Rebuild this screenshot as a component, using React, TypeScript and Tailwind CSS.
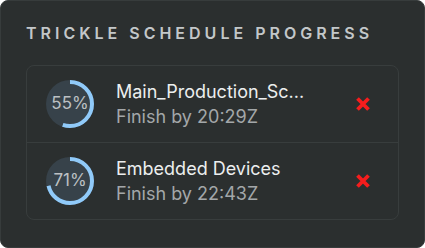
import type React from "react";

type Job = {
    name: string;
    finish: string;
    pct: number;
};

const jobs: Job[] = [
    { name: "Main_Production_Sc...", finish: "20:29Z", pct: 55 },
    { name: "Embedded Devices", finish: "22:43Z", pct: 71 },
];

const ProgressRing: React.FC<{ pct: number }> = ({ pct }) => {
    const r = 22;
    const c = 2 * Math.PI * r;
    return (
        <div className="relative w-12 h-12 shrink-0">
            <svg viewBox="0 0 48 48" className="w-12 h-12 -rotate-90">
                <circle cx="24" cy="24" r="24" fill="#37424a" />
                <circle
                    cx="24"
                    cy="24"
                    r={r}
                    fill="none"
                    stroke="#90caf9"
                    strokeWidth="4"
                    strokeDasharray={`${(c * pct) / 100} ${c}`}
                />
            </svg>
            <span className="absolute inset-0 flex items-center justify-center text-[17px] text-[#bcc0c3]">
                {pct}%
            </span>
        </div>
    );
};

const CloseIcon: React.FC = () => (
    <svg viewBox="0 0 16 16" className="w-4 h-4">
        <path
            d="M2.5 2.5 L13.5 13.5 M13.5 2.5 L2.5 13.5"
            stroke="#f51d1d"
            strokeWidth="3.8"
            fill="none"
        />
    </svg>
);

export default function App() {
    return (
        <div
            className="h-screen w-full bg-[#2b2f2f] border border-[#373c3c] rounded-lg px-[25px] pt-5 text-white"
            style={{ fontFamily: "Inter, 'Noto Sans', sans-serif" }}
        >
            <h2 className="text-base leading-6 font-semibold uppercase tracking-[0.25em] text-[#c3c7c9]">
                Trickle Schedule Progress
            </h2>
            <div className="mt-5 border border-[#383d3d] rounded-lg divide-y divide-[#383d3d]">
                {jobs.map((job) => (
                    <div
                        key={job.name}
                        className="flex items-center pl-[19px] pr-[27px] py-[13px]"
                    >
                        <ProgressRing pct={job.pct} />
                        <div className="ml-[22px] flex-1 min-w-0">
                            <div className="text-[18px] leading-[25px] text-[#eceeee] truncate">
                                {job.name}
                            </div>
                            <div className="text-[18px] leading-[25px] text-[#a3a7a9]">
                                Finish by {job.finish}
                            </div>
                        </div>
                        <button aria-label="Cancel" className="shrink-0">
                            <CloseIcon />
                        </button>
                    </div>
                ))}
            </div>
        </div>
    );
}
